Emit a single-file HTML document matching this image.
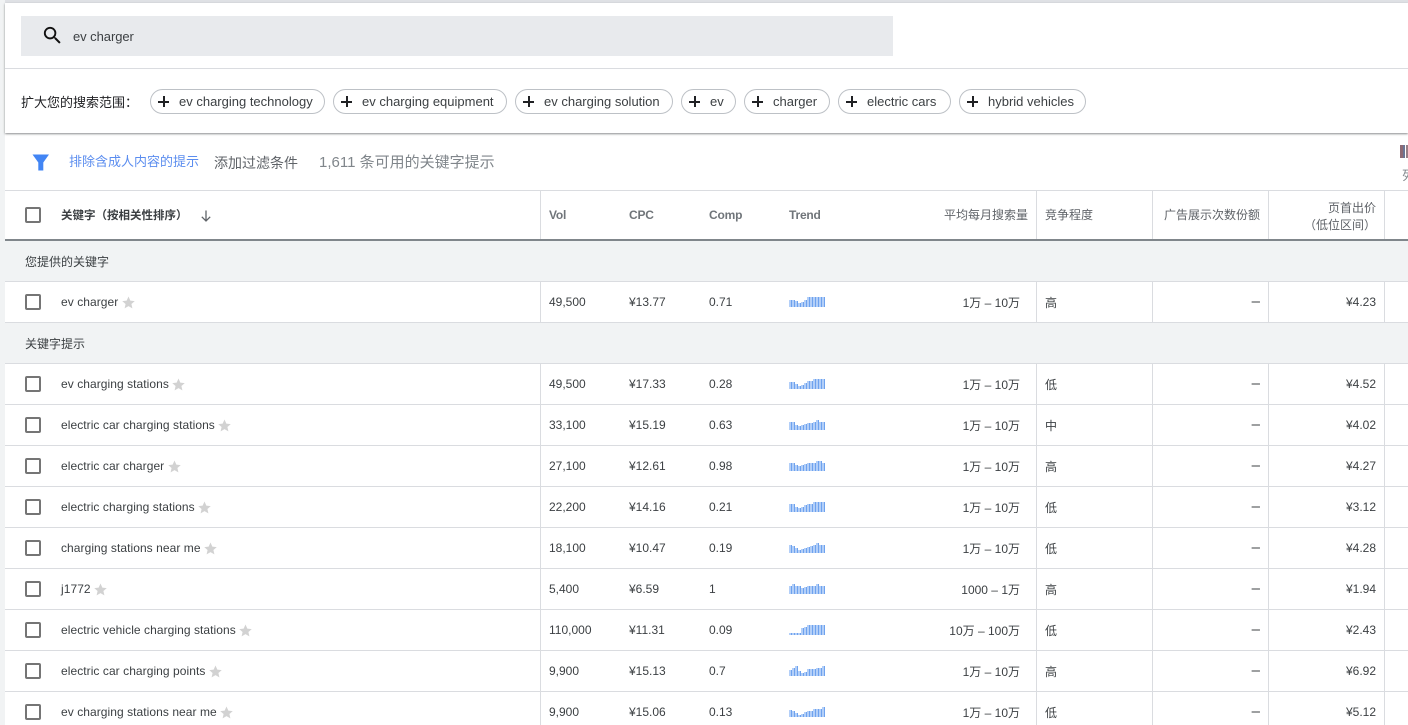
<!DOCTYPE html>
<html lang="zh">
<head>
<meta charset="utf-8">
<title>Keyword Planner</title>
<style>
html,body{margin:0;padding:0;width:1408px;height:725px;overflow:hidden;background:#fff}
body{position:relative;font-family:"Liberation Sans","Noto Sans CJK SC",sans-serif;font-size:12px;color:#3c4043}
.a{position:absolute;white-space:nowrap}
.bar{position:absolute;background:#f1f3f4}
.line{position:absolute;background:#dadce0}
.chip{position:absolute;top:89px;height:23px;border:1px solid #bdc1c6;border-radius:13px;background:#fff;font-size:13px;line-height:23px;color:#3c4043;white-space:nowrap;box-sizing:content-box}
.chip b{position:absolute;left:7px;top:6px;width:11px;height:11px}
.chip b:before{content:"";position:absolute;left:0;top:4.5px;width:11px;height:2px;background:#202124}
.chip b:after{content:"";position:absolute;left:4.5px;top:0;width:2px;height:11px;background:#202124}
.chip span{position:absolute;left:28px;top:0}
.cb{position:absolute;left:25px;width:12px;height:12px;border:2px solid #757575;border-radius:2px;background:#fff}
.v{position:absolute;top:0;width:1px;background:#dadce0}
.r{position:absolute;left:5px;width:1403px;height:40px;border-bottom:1px solid #dadce0;background:#fff}
.g{background:#f1f3f4}
.t{position:absolute;top:13px;line-height:14px;white-space:nowrap;font-size:12px}
.g .t,.c{top:14px}
.d{right:148px;font-size:15px;top:12px;line-height:15px}
.kw{left:56px;display:flex;align-items:center;letter-spacing:.06px}
.kw svg{margin-left:3.500px}
.tr{position:absolute;left:784px;top:15px;height:10px;display:flex;align-items:flex-end}
.tr i{display:block;width:2px;background:#b3cff8;border-right:1px solid #6ea2ee}
.rr{text-align:right}
.h{position:absolute;font-size:12px;line-height:14px;white-space:nowrap;color:#5f6368}
.en{font-weight:bold;color:#70757a;letter-spacing:-.2px}
</style>
</head>
<body>
<div class="bar" style="left:0;top:0;width:1408px;height:3px;background:#dfe1e5"></div>
<div class="bar" style="left:0;top:0;width:5px;height:725px"></div>

<div class="a" style="left:5px;top:3px;width:1403px;height:130px;background:#fff;box-shadow:0 1px 2px rgba(60,64,67,.6)"></div>
<div class="a" style="left:21px;top:16px;width:872px;height:40px;background:#e8eaed"></div>
<svg class="a" style="left:41px;top:24px" width="23" height="23" viewBox="0 0 24 24"><path fill="#111" d="M15.500 14h-.79l-.28-.27A6.470 6.470 0 0 0 16 9.500 6.500 6.500 0 1 0 9.500 16c1.610 0 3.090-.59 4.230-1.570l.27.28v.79l5 4.990L20.490 19l-4.990-5zm-6 0C7.010 14 5 11.990 5 9.500S7.010 5 9.500 5 14 7.010 14 9.500 11.990 14 9.500 14z"/></svg>
<div class="a" style="left:73px;top:29px;font-size:13px;line-height:15px;color:#3c4043;letter-spacing:-.06px">ev charger</div>
<div class="line" style="left:5px;top:68px;width:1403px;height:1px"></div>

<div class="a" style="left:21px;top:94px;font-size:13px;line-height:17px;color:#202124">扩大您的搜索范围：</div>
<div class="chip" style="left:150px;width:173px"><b></b><span>ev charging technology</span></div>
<div class="chip" style="left:333px;width:172px"><b></b><span>ev charging equipment</span></div>
<div class="chip" style="left:515px;width:156px"><b></b><span>ev charging solution</span></div>
<div class="chip" style="left:681px;width:53px"><b></b><span>ev</span></div>
<div class="chip" style="left:744px;width:84px"><b></b><span>charger</span></div>
<div class="chip" style="left:838px;width:111px"><b></b><span>electric cars</span></div>
<div class="chip" style="left:959px;width:125px"><b></b><span>hybrid vehicles</span></div>

<svg class="a" style="left:32px;top:154px" width="18" height="17" viewBox="0 0 18 17"><path fill="#4285f4" d="M0.500 0.500H17L11.300 8.500V16.500H6.300V8.500Z"/></svg>
<div class="a" style="left:69px;top:153px;font-size:13px;line-height:17px;color:#5b8def">排除含成人内容的提示</div>
<div class="a" style="left:214px;top:155px;font-size:14px;line-height:17px;color:#5f6368">添加过滤条件</div>
<div class="a" style="left:319px;top:154px;font-size:15px;line-height:18px;color:#80868b">1,611 条可用的关键字提示</div>

<div class="a" style="left:1400px;top:145px;width:8px;height:13px;overflow:hidden"><div style="position:absolute;left:0;top:0;width:3px;height:13px;background:#8e6a75"></div><div style="position:absolute;left:3px;top:0;width:2px;height:13px;background:#6b7594"></div><div style="position:absolute;left:6px;top:0;width:2px;height:13px;background:#9a7f86"></div></div>
<div class="a" style="left:1402px;top:168px;font-size:13px;line-height:16px;color:#80868b">列</div>

<!-- header -->
<div class="line" style="left:5px;top:190px;width:1403px;height:1px"></div>
<div class="a" style="left:5px;top:239px;width:1403px;height:2px;background:#80868b"></div>
<div class="cb" style="top:207px"></div>
<div class="h" style="left:61px;top:209px;color:#3c4043;font-weight:bold;font-size:11.500px">关键字（按相关性排序）</div>
<svg class="a" style="left:199px;top:209px" width="14" height="14" viewBox="0 0 14 14"><path fill="none" stroke="#5f6368" stroke-width="1.300" d="M7 1.500V12M2.800 7.800L7 12L11.200 7.800"/></svg>
<div class="h en" style="left:549px;top:208px">Vol</div>
<div class="h en" style="left:629px;top:208px">CPC</div>
<div class="h en" style="left:709px;top:208px">Comp</div>
<div class="h en" style="left:789px;top:208px">Trend</div>
<div class="h rr" style="right:380px;top:208px">平均每月搜索量</div>
<div class="h" style="left:1045px;top:208px">竞争程度</div>
<div class="h rr" style="right:148px;top:208px">广告展示次数份额</div>
<div class="h rr" style="right:32px;top:200px;line-height:17px">页首出价<br>（低位区间）</div>

<!-- group 1 -->
<div class="r g" style="top:241px"><div class="t" style="left:20px;color:#3c4043">您提供的关键字</div></div>

<div class="r" style="top:282px">
<div class="t kw">ev charger<svg width="13" height="13" viewBox="0 0 24 24"><path fill="#d2d2d2" d="M12 1l3.400 7.600 8.100.8-6.100 5.400 1.800 8.100L12 18.700l-7.200 4.200 1.800-8.100L.5 9.400l8.100-.8z"/></svg></div>
<div class="t" style="left:544px">49,500</div><div class="t" style="left:624px">¥13.77</div><div class="t" style="left:704px">0.71</div>
<div class="tr"><i style="height:7px"></i><i style="height:7px"></i><i style="height:6px"></i><i style="height:4px"></i><i style="height:5px"></i><i style="height:7px"></i><i style="height:10px"></i><i style="height:10px"></i><i style="height:10px"></i><i style="height:10px"></i><i style="height:10px"></i><i style="height:10px"></i></div>
<div class="t rr c" style="right:388px">1万 – 10万</div><div class="t c" style="left:1040px">高</div><div class="t rr d">–</div><div class="t rr" style="right:32px">¥4.23</div>
</div>

<!-- group 2 -->
<div class="r g" style="top:323px"><div class="t" style="left:20px;color:#3c4043">关键字提示</div></div>

<div class="r" style="top:364px">
<div class="t kw">ev charging stations<svg width="13" height="13" viewBox="0 0 24 24"><path fill="#d2d2d2" d="M12 1l3.400 7.600 8.100.8-6.100 5.400 1.800 8.100L12 18.700l-7.200 4.200 1.800-8.100L.5 9.400l8.100-.8z"/></svg></div>
<div class="t" style="left:544px">49,500</div><div class="t" style="left:624px">¥17.33</div><div class="t" style="left:704px">0.28</div>
<div class="tr"><i style="height:7px"></i><i style="height:7px"></i><i style="height:5px"></i><i style="height:3px"></i><i style="height:4px"></i><i style="height:6px"></i><i style="height:8px"></i><i style="height:8px"></i><i style="height:10px"></i><i style="height:10px"></i><i style="height:10px"></i><i style="height:10px"></i></div>
<div class="t rr c" style="right:388px">1万 – 10万</div><div class="t c" style="left:1040px">低</div><div class="t rr d">–</div><div class="t rr" style="right:32px">¥4.52</div>
</div>

<div class="r" style="top:405px">
<div class="t kw">electric car charging stations<svg width="13" height="13" viewBox="0 0 24 24"><path fill="#d2d2d2" d="M12 1l3.400 7.600 8.100.8-6.100 5.400 1.800 8.100L12 18.700l-7.200 4.200 1.800-8.100L.5 9.400l8.100-.8z"/></svg></div>
<div class="t" style="left:544px">33,100</div><div class="t" style="left:624px">¥15.19</div><div class="t" style="left:704px">0.63</div>
<div class="tr"><i style="height:8px"></i><i style="height:8px"></i><i style="height:5px"></i><i style="height:4px"></i><i style="height:5px"></i><i style="height:6px"></i><i style="height:7px"></i><i style="height:7px"></i><i style="height:8px"></i><i style="height:10px"></i><i style="height:8px"></i><i style="height:8px"></i></div>
<div class="t rr c" style="right:388px">1万 – 10万</div><div class="t c" style="left:1040px">中</div><div class="t rr d">–</div><div class="t rr" style="right:32px">¥4.02</div>
</div>

<div class="r" style="top:446px">
<div class="t kw">electric car charger<svg width="13" height="13" viewBox="0 0 24 24"><path fill="#d2d2d2" d="M12 1l3.400 7.600 8.100.8-6.100 5.400 1.800 8.100L12 18.700l-7.200 4.200 1.800-8.100L.5 9.400l8.100-.8z"/></svg></div>
<div class="t" style="left:544px">27,100</div><div class="t" style="left:624px">¥12.61</div><div class="t" style="left:704px">0.98</div>
<div class="tr"><i style="height:8px"></i><i style="height:8px"></i><i style="height:6px"></i><i style="height:5px"></i><i style="height:6px"></i><i style="height:7px"></i><i style="height:8px"></i><i style="height:8px"></i><i style="height:8px"></i><i style="height:10px"></i><i style="height:10px"></i><i style="height:8px"></i></div>
<div class="t rr c" style="right:388px">1万 – 10万</div><div class="t c" style="left:1040px">高</div><div class="t rr d">–</div><div class="t rr" style="right:32px">¥4.27</div>
</div>

<div class="r" style="top:487px">
<div class="t kw">electric charging stations<svg width="13" height="13" viewBox="0 0 24 24"><path fill="#d2d2d2" d="M12 1l3.400 7.600 8.100.8-6.100 5.400 1.800 8.100L12 18.700l-7.200 4.200 1.800-8.100L.5 9.400l8.100-.8z"/></svg></div>
<div class="t" style="left:544px">22,200</div><div class="t" style="left:624px">¥14.16</div><div class="t" style="left:704px">0.21</div>
<div class="tr"><i style="height:8px"></i><i style="height:8px"></i><i style="height:5px"></i><i style="height:4px"></i><i style="height:5px"></i><i style="height:7px"></i><i style="height:8px"></i><i style="height:8px"></i><i style="height:10px"></i><i style="height:10px"></i><i style="height:10px"></i><i style="height:10px"></i></div>
<div class="t rr c" style="right:388px">1万 – 10万</div><div class="t c" style="left:1040px">低</div><div class="t rr d">–</div><div class="t rr" style="right:32px">¥3.12</div>
</div>

<div class="r" style="top:528px">
<div class="t kw">charging stations near me<svg width="13" height="13" viewBox="0 0 24 24"><path fill="#d2d2d2" d="M12 1l3.400 7.600 8.100.8-6.100 5.400 1.800 8.100L12 18.700l-7.200 4.200 1.800-8.100L.5 9.400l8.100-.8z"/></svg></div>
<div class="t" style="left:544px">18,100</div><div class="t" style="left:624px">¥10.47</div><div class="t" style="left:704px">0.19</div>
<div class="tr"><i style="height:8px"></i><i style="height:7px"></i><i style="height:5px"></i><i style="height:3px"></i><i style="height:4px"></i><i style="height:5px"></i><i style="height:6px"></i><i style="height:7px"></i><i style="height:8px"></i><i style="height:10px"></i><i style="height:8px"></i><i style="height:8px"></i></div>
<div class="t rr c" style="right:388px">1万 – 10万</div><div class="t c" style="left:1040px">低</div><div class="t rr d">–</div><div class="t rr" style="right:32px">¥4.28</div>
</div>

<div class="r" style="top:569px">
<div class="t kw">j1772<svg width="13" height="13" viewBox="0 0 24 24"><path fill="#d2d2d2" d="M12 1l3.400 7.600 8.100.8-6.100 5.400 1.800 8.100L12 18.700l-7.200 4.200 1.800-8.100L.5 9.400l8.100-.8z"/></svg></div>
<div class="t" style="left:544px">5,400</div><div class="t" style="left:624px">¥6.59</div><div class="t" style="left:704px">1</div>
<div class="tr"><i style="height:8px"></i><i style="height:10px"></i><i style="height:8px"></i><i style="height:8px"></i><i style="height:6px"></i><i style="height:7px"></i><i style="height:8px"></i><i style="height:8px"></i><i style="height:8px"></i><i style="height:10px"></i><i style="height:8px"></i><i style="height:8px"></i></div>
<div class="t rr c" style="right:388px">1000 – 1万</div><div class="t c" style="left:1040px">高</div><div class="t rr d">–</div><div class="t rr" style="right:32px">¥1.94</div>
</div>

<div class="r" style="top:610px">
<div class="t kw">electric vehicle charging stations<svg width="13" height="13" viewBox="0 0 24 24"><path fill="#d2d2d2" d="M12 1l3.400 7.600 8.100.8-6.100 5.400 1.800 8.100L12 18.700l-7.200 4.200 1.800-8.100L.5 9.400l8.100-.8z"/></svg></div>
<div class="t" style="left:544px">110,000</div><div class="t" style="left:624px">¥11.31</div><div class="t" style="left:704px">0.09</div>
<div class="tr"><i style="height:2px"></i><i style="height:2px"></i><i style="height:2px"></i><i style="height:2px"></i><i style="height:7px"></i><i style="height:8px"></i><i style="height:10px"></i><i style="height:10px"></i><i style="height:10px"></i><i style="height:10px"></i><i style="height:10px"></i><i style="height:10px"></i></div>
<div class="t rr c" style="right:388px">10万 – 100万</div><div class="t c" style="left:1040px">低</div><div class="t rr d">–</div><div class="t rr" style="right:32px">¥2.43</div>
</div>

<div class="r" style="top:651px">
<div class="t kw">electric car charging points<svg width="13" height="13" viewBox="0 0 24 24"><path fill="#d2d2d2" d="M12 1l3.400 7.600 8.100.8-6.100 5.400 1.800 8.100L12 18.700l-7.200 4.200 1.800-8.100L.5 9.400l8.100-.8z"/></svg></div>
<div class="t" style="left:544px">9,900</div><div class="t" style="left:624px">¥15.13</div><div class="t" style="left:704px">0.7</div>
<div class="tr"><i style="height:6px"></i><i style="height:8px"></i><i style="height:10px"></i><i style="height:5px"></i><i style="height:3px"></i><i style="height:4px"></i><i style="height:7px"></i><i style="height:7px"></i><i style="height:7px"></i><i style="height:8px"></i><i style="height:8px"></i><i style="height:10px"></i></div>
<div class="t rr c" style="right:388px">1万 – 10万</div><div class="t c" style="left:1040px">高</div><div class="t rr d">–</div><div class="t rr" style="right:32px">¥6.92</div>
</div>

<div class="r" style="top:692px">
<div class="t kw">ev charging stations near me<svg width="13" height="13" viewBox="0 0 24 24"><path fill="#d2d2d2" d="M12 1l3.400 7.600 8.100.8-6.100 5.400 1.800 8.100L12 18.700l-7.200 4.200 1.800-8.100L.5 9.400l8.100-.8z"/></svg></div>
<div class="t" style="left:544px">9,900</div><div class="t" style="left:624px">¥15.06</div><div class="t" style="left:704px">0.13</div>
<div class="tr"><i style="height:7px"></i><i style="height:6px"></i><i style="height:4px"></i><i style="height:2px"></i><i style="height:3px"></i><i style="height:5px"></i><i style="height:6px"></i><i style="height:6px"></i><i style="height:8px"></i><i style="height:8px"></i><i style="height:8px"></i><i style="height:10px"></i></div>
<div class="t rr c" style="right:388px">1万 – 10万</div><div class="t c" style="left:1040px">低</div><div class="t rr d">–</div><div class="t rr" style="right:32px">¥5.12</div>
</div>

<div class="cb" style="top:294px"></div>
<div class="cb" style="top:376px"></div>
<div class="cb" style="top:417px"></div>
<div class="cb" style="top:458px"></div>
<div class="cb" style="top:499px"></div>
<div class="cb" style="top:540px"></div>
<div class="cb" style="top:581px"></div>
<div class="cb" style="top:622px"></div>
<div class="cb" style="top:663px"></div>
<div class="cb" style="top:704px"></div>

<!-- vertical column lines: header and data rows, not across group rows -->
<div class="v" style="left:540px;top:191px;height:48px"></div>
<div class="v" style="left:1036px;top:191px;height:48px"></div>
<div class="v" style="left:1152px;top:191px;height:48px"></div>
<div class="v" style="left:1268px;top:191px;height:48px"></div>
<div class="v" style="left:1384px;top:191px;height:48px"></div>
<div class="v" style="left:540px;top:282px;height:40px"></div>
<div class="v" style="left:1036px;top:282px;height:40px"></div>
<div class="v" style="left:1152px;top:282px;height:40px"></div>
<div class="v" style="left:1268px;top:282px;height:40px"></div>
<div class="v" style="left:1384px;top:282px;height:40px"></div>
<div class="v" style="left:540px;top:364px;height:361px"></div>
<div class="v" style="left:1036px;top:364px;height:361px"></div>
<div class="v" style="left:1152px;top:364px;height:361px"></div>
<div class="v" style="left:1268px;top:364px;height:361px"></div>
<div class="v" style="left:1384px;top:364px;height:361px"></div>
</body>
</html>
